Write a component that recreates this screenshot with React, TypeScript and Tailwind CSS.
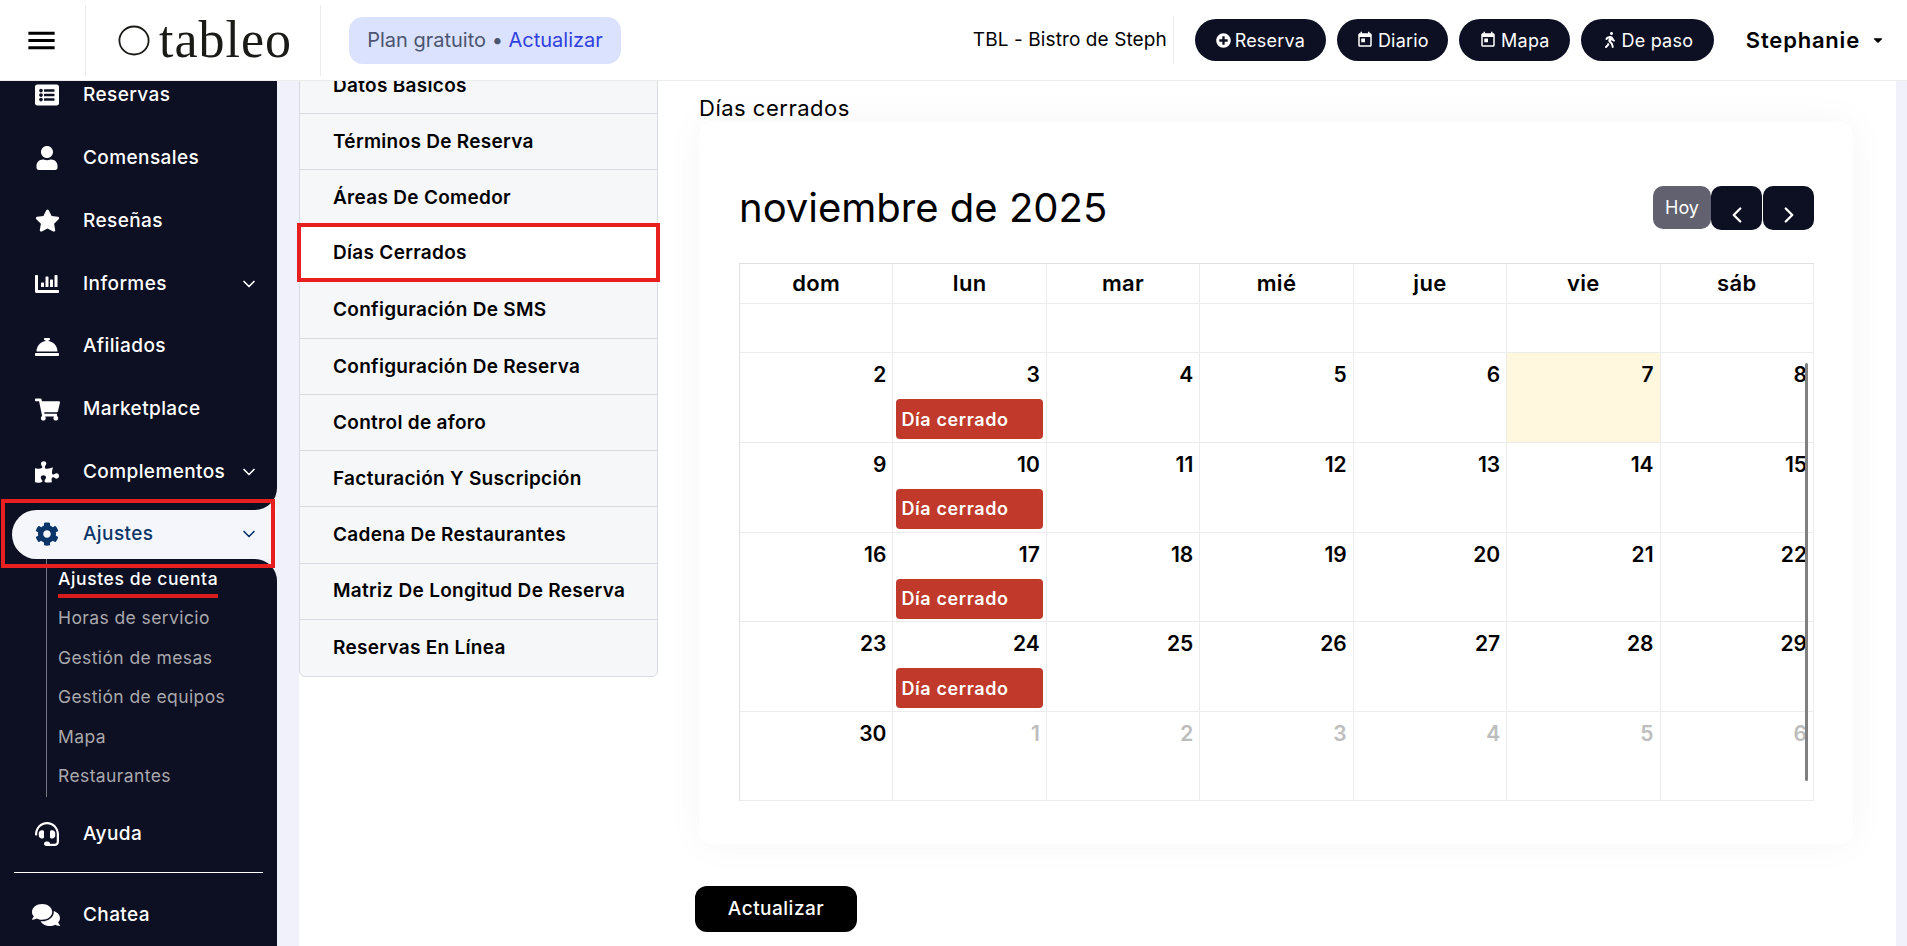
import { ChevronDown, ChevronLeft, ChevronRight } from "lucide-react";
import {
  FaCaretDown,
  FaChartBar,
  FaCog,
  FaComments,
  FaConciergeBell,
  FaHeadset,
  FaListAlt,
  FaPlusCircle,
  FaPuzzlePiece,
  FaShoppingCart,
  FaStar,
  FaUser,
  FaWalking,
} from "react-icons/fa";
import { MdMenu, MdToday } from "react-icons/md";

const font = "font-['Inter','Noto_Sans',sans-serif]";

const navTop = [
  { icon: FaListAlt, label: "Reservas", size: 24 },
  { icon: FaUser, label: "Comensales", size: 24 },
  { icon: FaStar, label: "Reseñas", size: 25 },
  { icon: FaChartBar, label: "Informes", arrow: true, size: 24 },
  { icon: FaConciergeBell, label: "Afiliados", size: 24 },
  { icon: FaShoppingCart, label: "Marketplace", size: 25 },
  { icon: FaPuzzlePiece, label: "Complementos", arrow: true, size: 24 },
];

const subItems = ["Horas de servicio", "Gestión de mesas", "Gestión de equipos", "Mapa", "Restaurantes"];

const tabs = [
  "Datos Básicos",
  "Términos De Reserva",
  "Áreas De Comedor",
  "Días Cerrados",
  "Configuración De SMS",
  "Configuración De Reserva",
  "Control de aforo",
  "Facturación Y Suscripción",
  "Cadena De Restaurantes",
  "Matriz De Longitud De Reserva",
  "Reservas En Línea",
];

const weekDays = ["dom", "lun", "mar", "mié", "jue", "vie", "sáb"];

const weeks = [
  [2, 3, 4, 5, 6, 7, 8],
  [9, 10, 11, 12, 13, 14, 15],
  [16, 17, 18, 19, 20, 21, 22],
  [23, 24, 25, 26, 27, 28, 29],
];

const headerButtons = [
  { icon: FaPlusCircle, label: "Reserva", width: "w-[131px]", size: 15 },
  { icon: MdToday, label: "Diario", width: "w-[111px]", size: 18 },
  { icon: MdToday, label: "Mapa", width: "w-[111px]", size: 18 },
  { icon: FaWalking, label: "De paso", width: "w-[133px]", size: 16 },
];

function Header() {
  return (
    <header className="flex h-[81px] shrink-0 items-center border-b border-[#ececec] bg-white">
      <div className="flex h-[71px] w-[86px] shrink-0 items-center border-r border-[#ececec] pl-[24px]">
        <MdMenu size={35} className="text-black" />
      </div>
      <div className="flex h-[71px] w-[235px] shrink-0 items-center gap-[9px] border-r border-[#ececec] pl-[32px]">
        <svg width="32" height="31" viewBox="0 0 32 31" className="shrink-0">
          <ellipse cx="16" cy="15.5" rx="14.6" ry="14" fill="none" stroke="#1a1a16" strokeWidth="1.8" />
        </svg>
        <span className="font-['Liberation_Serif',serif] text-[52px] leading-none tracking-[1px] text-[#1a1a16]">
          tableo
        </span>
      </div>
      <div className="ml-[28px] flex h-[47px] w-[272px] items-center justify-center rounded-[14px] bg-[#dbe2fd] text-[20px] text-[#4b5570]">
        Plan gratuito •&nbsp;<span className="text-[#2f3fe0]">Actualizar</span>
      </div>
      <div className="ml-auto flex items-center">
        <span className="text-[19px] tracking-[0.1px] text-black">TBL - Bistro de Steph</span>
        <div className="ml-[6px] h-[48px] w-px bg-[#ececec]" />
        <div className="ml-[21px] flex gap-[11px]">
          {headerButtons.map(({ icon: Icon, label, width, size }) => (
            <button
              key={label}
              className={`${width} flex h-[42px] items-center justify-center gap-[4px] rounded-full bg-[#0d0f22] text-[18px] tracking-[0.2px] text-white`}
            >
              <Icon size={size} />
              {label}
            </button>
          ))}
        </div>
        <span className="ml-[32px] text-[22px] font-semibold tracking-[0.8px] text-black">Stephanie</span>
        <FaCaretDown size={14} className="ml-[11px] mr-[22px] text-black" />
      </div>
    </header>
  );
}

function NavRow({
  icon: Icon,
  label,
  arrow,
  size = 24,
  iconClass,
}: {
  icon: typeof FaUser;
  label: string;
  arrow?: boolean;
  size?: number;
  iconClass?: string;
}) {
  return (
    <div className="flex h-[62.8px] items-center pl-[35px] text-white">
      <span className="flex w-[48px] shrink-0">
        <Icon size={size} className={iconClass} />
      </span>
      <span className="text-[19px] font-medium tracking-[0.4px]">{label}</span>
      {arrow && <ChevronDown size={20} className="ml-auto mr-[18px]" />}
    </div>
  );
}

function Sidebar() {
  return (
    <aside className="flex w-[277px] shrink-0 flex-col overflow-hidden bg-[#f0f1fa]">
      {/* la parte de arriba lleva la curva hacia el item activo */}
      <div className="-mt-[17px] rounded-br-[22px] bg-[#0d0f22] pb-[6px]">
        {navTop.map((item) => (
          <NavRow key={item.label} {...item} />
        ))}
      </div>
      <div className="relative bg-[#0d0f22] pl-[12px]">
        <div className="flex h-[49px] items-center rounded-l-full bg-[#f4f6fc] pl-[23px] text-[#0b3568]">
          <span className="flex w-[48px] shrink-0">
            <FaCog size={24} />
          </span>
          <span className="text-[19px] font-medium tracking-[0.4px]">Ajustes</span>
          <ChevronDown size={20} className="ml-auto mr-[18px]" />
        </div>
        {/* recuadro rojo de la anotacion */}
        <div className="absolute -bottom-[9px] -top-[11px] left-[1px] right-[2px] z-10 border-[4px] border-[#e81f1f]" />
      </div>
      <div className="grow rounded-tr-[22px] bg-[#0d0f22]">
        <div className="mb-[6px] ml-[46px] h-[238px] border-l border-[#77777f] pl-[11px] pt-[2px]">
          <div className="h-[37px] w-fit border-b-[4px] border-[#d91c1c] text-[17.5px] font-medium leading-[36px] tracking-[0.6px] text-white">
            Ajustes de cuenta
          </div>
          <div className="mt-[1px]">
            {subItems.map((label) => (
              <div key={label} className="flex h-[39.5px] items-center text-[17.5px] tracking-[0.4px] text-[#a9a9ad]">
                {label}
              </div>
            ))}
          </div>
        </div>
        <NavRow icon={FaHeadset} label="Ayuda" />
        <div className="mx-[14px] mb-[10px] mt-[7px] h-px bg-white" />
        <NavRow icon={FaComments} label="Chatea" size={28} iconClass="-ml-[3px]" />
      </div>
    </aside>
  );
}

function Tabs() {
  return (
    <div className="-mt-[24px] h-fit w-[359px] shrink-0 rounded-b-[6px] border border-[#d9dbe2] bg-[#f6f7f9]">
      {tabs.map((tab) => {
        const active = tab === "Días Cerrados";
        return (
          <div
            key={tab}
            className={`flex items-center text-[19px] font-semibold tracking-[0.3px] text-black ${
              active
                ? "relative z-10 -mx-[3px] -mt-[4px] mb-[1px] h-[59px] border-[4px] border-[#e81f1f] bg-white pl-[32px] pt-[3px]"
                : "h-[56.2px] border-b border-[#d9dbe2] pl-[33px] pt-[1px] last:border-b-0"
            }`}
          >
            {tab}
          </div>
        );
      })}
    </div>
  );
}

function DayCell({ day, closed, today, muted }: { day: number; closed?: boolean; today?: boolean; muted?: boolean }) {
  return (
    <div className={`border-r border-b border-[#ececec] px-[3px] pt-[6px] ${today ? "bg-[#fff8df]" : "bg-white"}`}>
      <div className={`pr-[3px] text-right text-[21px] font-semibold leading-[32px] ${muted ? "text-[#bdbdbd]" : "text-black"}`}>
        {day}
      </div>
      {closed && (
        <div className="mt-[8px] flex h-[40px] items-center rounded-[4px] bg-[#c0392b] pl-[5px] text-[18px] font-semibold tracking-[0.6px] text-white">
          Día cerrado
        </div>
      )}
    </div>
  );
}

function Calendar() {
  return (
    <div className="relative h-[722px] w-[1154px] rounded-[12px] bg-white pl-[40px] pr-[39px] pt-[64px] shadow-[0_0_40px_rgba(0,0,0,0.04)]">
      <div className="flex h-[77px] items-start justify-between">
        <h2 className="text-[40px] leading-[44px] text-black">noviembre de 2025</h2>
        <div className="flex">
          <button className="h-[43px] w-[58px] rounded-[10px] bg-[#62616f] text-[18px] text-white">Hoy</button>
          <button className="flex h-[44px] w-[51px] items-end justify-center rounded-[10px] bg-[#0d0f22] pb-[2px] text-white">
            <ChevronLeft size={26} strokeWidth={2.2} />
          </button>
          <button className="ml-px flex h-[44px] w-[51px] items-end justify-center rounded-[10px] bg-[#0d0f22] pb-[2px] text-white">
            <ChevronRight size={26} strokeWidth={2.2} />
          </button>
        </div>
      </div>
      <div className="grid grid-cols-7 grid-rows-[40px_49px_89.8px_89.8px_89.8px_89.8px_88.6px] border-t border-l border-[#dfdfdf]">
        {weekDays.map((d) => (
          <div key={d} className="flex items-center justify-center border-r border-b border-[#ececec] text-[22px] font-semibold tracking-[0.3px] text-black">
            {d}
          </div>
        ))}
        {weekDays.map((d) => (
          <div key={d} className="border-r border-b border-[#ececec]" />
        ))}
        {weeks.map((week) =>
          week.map((day, i) => <DayCell key={day} day={day} closed={i === 1} today={day === 7} />),
        )}
        <DayCell day={30} />
        {[1, 2, 3, 4, 5, 6].map((day) => (
          <DayCell key={day} day={day} muted />
        ))}
      </div>
      {/* barra de scroll encima del calendario */}
      <div className="absolute left-[1106px] top-[241px] h-[418px] w-[3px] rounded-full bg-[#808080]" />
    </div>
  );
}

export default function App() {
  return (
    <div className={`${font} flex h-[946px] flex-col overflow-hidden bg-white`}>
      <Header />
      <div className="flex min-h-0 grow">
        <Sidebar />
        <main className="flex grow overflow-hidden bg-[#f0f1fa] pl-[22px] pr-[11px]">
          <div className="flex grow bg-white">
            <Tabs />
            <div className="ml-[41px] pt-[15px]">
              <div className="h-[26px] text-[22px] leading-[25px] tracking-[0.5px] text-black">Días cerrados</div>
              <Calendar />
              <button className="-ml-[4px] mt-[42px] h-[46px] w-[162px] rounded-[12px] bg-black text-[19px] font-medium tracking-[0.5px] text-white">
                Actualizar
              </button>
            </div>
          </div>
        </main>
      </div>
    </div>
  );
}
